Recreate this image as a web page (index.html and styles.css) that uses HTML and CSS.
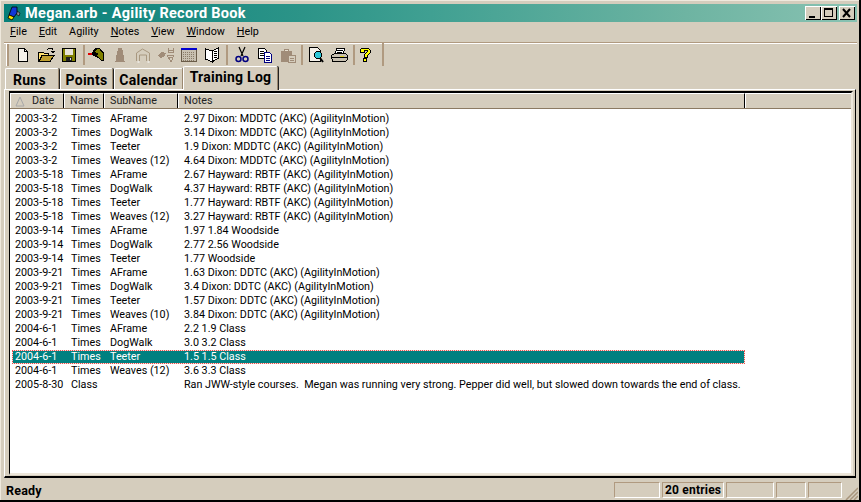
FILE: index.html
```html
<!DOCTYPE html>
<html lang="en">
<head>
<meta charset="utf-8">
<title>Megan.arb - Agility Record Book</title>
<link rel="stylesheet" href="styles.css">
</head>
<body>
<div class="window">
  <div class="titlebar">
    <svg class="appicon" width="16" height="16" viewBox="0 0 16 16"><path d="M12 6l3 2-1 3-3-2z" fill="#8a8a98" stroke="#000" stroke-width="0.600"/><path d="M7 2h5v6l-3 4-5-2z" fill="#1038d8" stroke="#000" stroke-width="0.800"/><path d="M4 10l5 2-2 3-4-2z" fill="#ffe800" stroke="#000" stroke-width="0.800"/></svg>
    <span class="titletext">Megan.arb - Agility Record Book</span>
    <div class="winbtns">
      <span class="winbtn"><svg width="16" height="14" viewBox="0 0 16 14"><rect x="4" y="10" width="6" height="2" fill="#000"/></svg></span>
      <span class="winbtn"><svg width="16" height="14" viewBox="0 0 16 14"><path d="M3 2h9v9H3z M4 4v6h7V4z" fill="#000" fill-rule="evenodd"/></svg></span>
      <span class="winbtn winclose"><svg width="16" height="14" viewBox="0 0 16 14"><path d="M4 3l7 8M11 3l-7 8" stroke="#000" stroke-width="2" fill="none"/></svg></span>
    </div>
  </div>
  <div class="menubar">
    <span class="menuitem"><u>F</u>ile</span>
    <span class="menuitem"><u>E</u>dit</span>
    <span class="menuitem">A<u>g</u>ility</span>
    <span class="menuitem"><u>N</u>otes</span>
    <span class="menuitem"><u>V</u>iew</span>
    <span class="menuitem"><u>W</u>indow</span>
    <span class="menuitem"><u>H</u>elp</span>
  </div>
  <div class="toolbar">
    <span class="grip"></span>
    <span class="tool first"><svg width="16" height="16" viewBox="0 0 16 16" shape-rendering="crispEdges"><path d="M3.500 1.500h6l3 3v10h-9z" fill="#f6f2ea" stroke="#000"/><path d="M9.500 1.500v3h3" fill="none" stroke="#000"/></svg></span>
    <span class="tool"><svg width="18" height="16" viewBox="0 0 18 16" shape-rendering="crispEdges"><path d="M1.500 5.500h5l1 1h4v8h-10z" fill="#ffe070" stroke="#000"/><path d="M2 14.500l3-6h12l-4 6z" fill="#c0a030" stroke="#000"/><path d="M10 3l2-2h3l1 2M14 4h4l-2 2z" fill="none" stroke="#000"/></svg></span>
    <span class="tool"><svg width="16" height="16" viewBox="0 0 16 16" shape-rendering="crispEdges"><rect x="1.500" y="1.500" width="13" height="13" fill="#808000" stroke="#000"/><rect x="4" y="2" width="8" height="6" fill="#e8e4d8"/><rect x="5" y="10" width="6" height="4" fill="#222"/><rect x="9" y="11" width="1" height="2" fill="#ddd"/></svg></span>
    <span class="sep"></span>
    <span class="tool"><svg width="18" height="15" viewBox="0 0 18 15" shape-rendering="crispEdges"><path d="M7 1h5l2 3 2 1v9h-3l-3-3-4-2-2-1H1V6h3z" fill="#000"/><path d="M9 2h3l1 3 2 1v7h-2l-3-3-2-2 3-1-3-1-1-1z" fill="#808000"/><rect x="0" y="6" width="4" height="2" fill="#e00000"/></svg></span>
    <span class="tool"><svg width="14" height="16" viewBox="0 0 14 16" shape-rendering="crispEdges"><path d="M5 1h4v2l1 1v3l1 2v5h1v1H2v-1h1V9l1-2V4l1-1z" fill="#a08c78"/></svg></span>
    <span class="tool"><svg width="18" height="16" viewBox="0 0 18 16" fill="none"><path d="M2.500 14V6l6-4 7 4v8" stroke="#a89880"/><path d="M5.500 14V8h7v6" stroke="#a89880"/><path d="M3.500 15h2M13.500 15h2" stroke="#fff"/></svg></span>
    <span class="tool"><svg width="18" height="16" viewBox="0 0 18 16" shape-rendering="crispEdges"><path d="M1 8l4-3 4 1-2 4-4 1z" fill="#a08c78"/><path d="M11 1v4h5V1M11 3h5M10 8l4 7 3-7zM12 10h3" fill="none" stroke="#a08c78"/></svg></span>
    <span class="tool"><svg width="16" height="16" viewBox="0 0 16 16" shape-rendering="crispEdges"><rect x="0.500" y="1.500" width="15" height="13" fill="#c8c0b0" stroke="#6a5c48"/><rect x="0" y="1" width="16" height="2" fill="#0000d0"/><path d="M2 5h12M2 7h12M2 9h12M2 11h12M2 13h12" stroke="#8a7c68" stroke-dasharray="1 1"/></svg></span>
    <span class="tool"><svg width="16" height="16" viewBox="0 0 16 16" fill="#fff" stroke="#000" shape-rendering="crispEdges"><path d="M8 4L1.500 2v10L8 15z"/><path d="M8 4l6.500-3v10L8 15z"/><path d="M10 5l3-1M10 7l3-1M10 9l3-1M10 11l3-1" fill="none"/></svg></span>
    <span class="sep sep-r"></span>
    <span class="tool"><svg width="14" height="18" viewBox="0 0 14 18" fill="none"><path d="M4 1l4 9M10 1L6 10" stroke="#000" stroke-width="1.200"/><circle cx="3.500" cy="13" r="2.500" stroke="#000080" stroke-width="1.500"/><circle cx="10.500" cy="13" r="2.500" stroke="#000080" stroke-width="1.500"/></svg></span>
    <span class="tool"><svg width="16" height="16" viewBox="0 0 16 16" shape-rendering="crispEdges"><path d="M1.500 1.500h6l2 2v8h-8z" fill="#fff" stroke="#000"/><path d="M3 4h4M3 6h4M3 8h4" stroke="#000"/><path d="M7.500 5.500h5l2 2v8h-7z" fill="#fff" stroke="#000080"/><path d="M9 9h4M9 11h4M9 13h4" stroke="#000080"/></svg></span>
    <span class="tool"><svg width="16" height="16" viewBox="0 0 16 16" shape-rendering="crispEdges"><path d="M1 4h3V2h5v2h3v11H1z" fill="#a08c78"/><path d="M8 8h7v7H8z" fill="#d5cdbd" stroke="#a08c78"/><path d="M10 11h4M10 13h4" stroke="#a08c78"/><path d="M5 3h3" stroke="#e8e0d0"/></svg></span>
    <span class="sep sep-m"></span>
    <span class="tool"><svg width="17" height="16" viewBox="0 0 17 16" shape-rendering="crispEdges"><path d="M1.500 0.500h8l3 3v11h-11z" fill="#f4f0e8" stroke="#000"/><circle cx="10" cy="8" r="3.500" fill="#30c8d8" stroke="#000"/><path d="M12 11l3 4" stroke="#000" stroke-width="2" shape-rendering="auto"/></svg></span>
    <span class="tool"><svg width="17" height="16" viewBox="0 0 17 16" shape-rendering="crispEdges"><path d="M5.500 1.500h8l-1 5h-8z" fill="#fff" stroke="#000"/><path d="M6 3h6M6 5h5" stroke="#000"/><path d="M0.500 8.500l3-2h11l2 2v4l-2 2h-13z" fill="#c8c0b0" stroke="#000"/><path d="M1 10h15" stroke="#000"/><path d="M9 9h4" stroke="#e0d020"/></svg></span>
    <span class="sep sep-m"></span>
    <span class="tool tool-help"><svg width="12" height="16" viewBox="0 0 12 16" shape-rendering="crispEdges"><path d="M3 1h6l2 2v3l-3 3v1H5V8l3-3V3H5v2H1V3z" fill="#ffff00" stroke="#000"/><rect x="4.500" y="11.500" width="3" height="3" fill="#ffff00" stroke="#000"/></svg></span>
    <span class="sep sep-end"></span>
  </div>
  <div class="tabs">
    <span class="tab tab-runs">Runs</span>
    <span class="tab tab-points">Points</span>
    <span class="tab tab-cal">Calendar</span>
    <span class="tab tab-active">Training Log</span>
  </div>
  <div class="panel">
    <div class="list">
      <div class="head">
        <span class="hcell c-date"><svg class="sorticon" width="10" height="11" viewBox="0 0 10 11" fill="none"><path d="M5 1L1 10h8z" stroke="#a8a8a8"/></svg>Date</span>
        <span class="hcell c-name">Name</span>
        <span class="hcell c-sub">SubName</span>
        <span class="hcell c-notes">Notes</span>
        <span class="hcell c-rest"></span>
      </div>
      <div class="rows">
        <div class="row"><span class="c-date">2003-3-2</span><span class="c-name">Times</span><span class="c-sub">AFrame</span><span class="c-notes">2.97 Dixon: MDDTC (AKC) (AgilityInMotion)</span></div>
        <div class="row"><span class="c-date">2003-3-2</span><span class="c-name">Times</span><span class="c-sub">DogWalk</span><span class="c-notes">3.14 Dixon: MDDTC (AKC) (AgilityInMotion)</span></div>
        <div class="row"><span class="c-date">2003-3-2</span><span class="c-name">Times</span><span class="c-sub">Teeter</span><span class="c-notes">1.9 Dixon: MDDTC (AKC) (AgilityInMotion)</span></div>
        <div class="row"><span class="c-date">2003-3-2</span><span class="c-name">Times</span><span class="c-sub">Weaves (12)</span><span class="c-notes">4.64 Dixon: MDDTC (AKC) (AgilityInMotion)</span></div>
        <div class="row"><span class="c-date">2003-5-18</span><span class="c-name">Times</span><span class="c-sub">AFrame</span><span class="c-notes">2.67 Hayward: RBTF (AKC) (AgilityInMotion)</span></div>
        <div class="row"><span class="c-date">2003-5-18</span><span class="c-name">Times</span><span class="c-sub">DogWalk</span><span class="c-notes">4.37 Hayward: RBTF (AKC) (AgilityInMotion)</span></div>
        <div class="row"><span class="c-date">2003-5-18</span><span class="c-name">Times</span><span class="c-sub">Teeter</span><span class="c-notes">1.77 Hayward: RBTF (AKC) (AgilityInMotion)</span></div>
        <div class="row"><span class="c-date">2003-5-18</span><span class="c-name">Times</span><span class="c-sub">Weaves (12)</span><span class="c-notes">3.27 Hayward: RBTF (AKC) (AgilityInMotion)</span></div>
        <div class="row"><span class="c-date">2003-9-14</span><span class="c-name">Times</span><span class="c-sub">AFrame</span><span class="c-notes">1.97 1.84 Woodside</span></div>
        <div class="row"><span class="c-date">2003-9-14</span><span class="c-name">Times</span><span class="c-sub">DogWalk</span><span class="c-notes">2.77 2.56 Woodside</span></div>
        <div class="row"><span class="c-date">2003-9-14</span><span class="c-name">Times</span><span class="c-sub">Teeter</span><span class="c-notes">1.77 Woodside</span></div>
        <div class="row"><span class="c-date">2003-9-21</span><span class="c-name">Times</span><span class="c-sub">AFrame</span><span class="c-notes">1.63 Dixon: DDTC (AKC) (AgilityInMotion)</span></div>
        <div class="row"><span class="c-date">2003-9-21</span><span class="c-name">Times</span><span class="c-sub">DogWalk</span><span class="c-notes">3.4 Dixon: DDTC (AKC) (AgilityInMotion)</span></div>
        <div class="row"><span class="c-date">2003-9-21</span><span class="c-name">Times</span><span class="c-sub">Teeter</span><span class="c-notes">1.57 Dixon: DDTC (AKC) (AgilityInMotion)</span></div>
        <div class="row"><span class="c-date">2003-9-21</span><span class="c-name">Times</span><span class="c-sub">Weaves (10)</span><span class="c-notes">3.84 Dixon: DDTC (AKC) (AgilityInMotion)</span></div>
        <div class="row"><span class="c-date">2004-6-1</span><span class="c-name">Times</span><span class="c-sub">AFrame</span><span class="c-notes">2.2 1.9 Class</span></div>
        <div class="row"><span class="c-date">2004-6-1</span><span class="c-name">Times</span><span class="c-sub">DogWalk</span><span class="c-notes">3.0 3.2 Class</span></div>
        <div class="row selected"><span class="c-date">2004-6-1</span><span class="c-name">Times</span><span class="c-sub">Teeter</span><span class="c-notes">1.5 1.5 Class</span></div>
        <div class="row"><span class="c-date">2004-6-1</span><span class="c-name">Times</span><span class="c-sub">Weaves (12)</span><span class="c-notes">3.6 3.3 Class</span></div>
        <div class="row"><span class="c-date">2005-8-30</span><span class="c-name">Class</span><span class="c-sub"></span><span class="c-notes">Ran JWW-style courses.&nbsp; Megan was running very strong. Pepper did well, but slowed down towards the end of class.</span></div>
      </div>
    </div>
  </div>
  <div class="statusbar">
    <span class="ready">Ready</span>
    <span class="pane p1"></span>
    <span class="pane p2">20 entries</span>
    <span class="pane p3"></span>
    <span class="pane p4"></span>
    <span class="pane p5"></span>
    <svg class="sizegrip" width="13" height="13" viewBox="0 0 13 13" fill="none"><path d="M1 13L13 1M5 13l8-8M9 13l4-4" stroke="#a8957c" stroke-width="1.500"/></svg>
  </div>
</div>
</body>
</html>
```
FILE: styles.css
```css
* { box-sizing: border-box; }
html, body { margin: 0; padding: 0; }
body {
  width: 861px;
  height: 502px;
  overflow: hidden;
  background: #d5cdbd;
  font-family: Roboto, "Liberation Sans", sans-serif;
  font-size: 10.750px;
  color: #000;
}
.window {
  width: 861px;
  height: 502px;
  display: flex;
  flex-direction: column;
  padding: 4px 0 0 4px;
  background: #d5cdbd;
  border-right: 2px solid #000;
  border-bottom: 2px solid #000;
  box-shadow: inset 1px 1px 0 #efe9dd;
}
.titlebar {
  flex: none;
  width: 853px;
  height: 18px;
  display: flex;
  align-items: center;
  padding: 0 2px 0 1px;
  background: linear-gradient(90deg, #067f79 0%, #2c9488 35%, #40a092 50%, #6eb4a2 80%, #88c2b2 100%);
}
.appicon { flex: none; }
.titletext {
  margin-left: 4px;
  color: #fff;
  font-family: Roboto, sans-serif;
  font-weight: 700;
  font-size: 14.500px;
  letter-spacing: 0.300px;
  white-space: nowrap;
}
.winbtns { margin-left: auto; display: flex; }
.winbtn {
  width: 16px;
  height: 14px;
  background: #d5cdbd;
  box-shadow: inset 1px 1px 0 #fff, inset -1px -1px 0 #000;
  display: block;
}
.winbtn svg { display: block; }
.winclose { margin-left: 2px; }
.menubar {
  flex: none;
  height: 20px;
  display: flex;
  align-items: center;
  padding-left: 6px;
  padding-bottom: 1px;
  font-size: 10.750px;
  width: 853px;
  gap: 12px;
}
.toolbar {
  flex: none;
  width: 853px;
  height: 26px;
  display: flex;
  align-items: center;
  padding-bottom: 2px;
  border-top: 1px solid #b09a80;
  box-shadow: inset 0 1px 0 #fff;
}
.grip {
  flex: none;
  width: 2px;
  height: 22px;
  margin-left: 3px;
  background: #b09a80;
  box-shadow: -1px 0 0 #fff;
}
.tool {
  flex: none;
  width: 23px;
  height: 22px;
  display: flex;
  align-items: center;
  justify-content: center;
}
.tool svg { display: block; }
.first { margin-left: 2px; }
.tool-help { width: 16px; }
.sep {
  flex: none;
  width: 2px;
  height: 20px;
  background: #b09a80;
  margin-left: 3px;
}
.sep-r { margin-right: 2px; }
.sep-m { margin-left: 2px; margin-right: 2px; }
.sep-end { height: 23px; margin-left: 9px; }
.tabs {
  flex: none;
  height: 21px;
  display: flex;
  align-items: flex-end;
  padding-left: 1px;
  font-family: Roboto, sans-serif;
  font-weight: 700;
  font-size: 14px;
  letter-spacing: 0.250px;
  width: 853px;
}
.tab {
  height: 21px;
  display: flex;
  align-items: center;
  justify-content: center;
  padding-top: 1px;
  border-top: 1px solid #fff;
  border-left: 1px solid #fff;
  border-right: 1px solid #9a8870;
  box-shadow: 1px 0 0 #222;
  border-radius: 2px 2px 0 0;
  white-space: nowrap;
}
.tab-runs { width: 54px; margin-right: 1px; padding-right: 5px; }
.tab-points { width: 53px; margin-right: 1px; }
.tab-cal { width: 69px; }
.tab-active {
  width: 95px;
  height: 24px;
  padding-top: 0;
  padding-bottom: 4px;
  margin-bottom: -1px;
  position: relative;
  background: #d5cdbd;
}
.panel {
  flex: none;
  width: 852px;
  height: 389px;
  padding: 1px 2px 1px 4px;
  border-top: 1px solid #fff;
  border-left: 1px solid #fff;
  border-right: 1px solid #000;
  border-bottom: 2px solid #000;
}
.list {
  height: 100%;
  display: flex;
  flex-direction: column;
  background: #fff;
  border-top: 2px solid #000;
  border-left: 1px solid #000;
  border-right: 2px solid #ece6da;
  border-bottom: 2px solid #ece6da;
}
.head {
  flex: none;
  height: 16px;
  display: flex;
  background: #d5cdbd;
  border-bottom: 1px solid #8c7a62;
}
.hcell {
  height: 15px;
  line-height: 14px;
  padding-left: 5px;
  border-top: 1px solid #fff;
  border-left: 1px solid #fff;
  border-right: 1px solid #000;
  white-space: nowrap;
  color: #222;
}
.head .c-date { width: 54px; padding-left: 4px; display: flex; align-items: center; }
.head .c-name { width: 40px; }
.head .c-sub { width: 74px; }
.head .c-notes { width: 567px; }
.head .c-rest { flex: 1; border-right: 0; }
.sorticon { margin-right: 7px; flex: none; }
.rows { flex: 1; padding: 3px 0 0 2px; }
.row {
  width: 733px;
  height: 14px;
  line-height: 14px;
  display: flex;
  white-space: nowrap;
}
.row .c-date { width: 59px; padding-left: 3px; flex: none; }
.row .c-name { width: 39px; flex: none; }
.row .c-sub { width: 74px; flex: none; }
.row .c-notes { flex: none; }
.selected {
  color: #fff;
  background-color: #008080;
  background-image:
    repeating-linear-gradient(90deg, #e85050 0 1px, #f8e0d8 1px 2px),
    repeating-linear-gradient(90deg, #e85050 0 1px, #f8e0d8 1px 2px),
    repeating-linear-gradient(0deg, #e85050 0 1px, #f8e0d8 1px 2px),
    repeating-linear-gradient(0deg, #e85050 0 1px, #f8e0d8 1px 2px);
  background-size: 100% 1px, 100% 1px, 1px 100%, 1px 100%;
  background-position: 0 0, 0 100%, 0 0, 100% 0;
  background-repeat: no-repeat;
}
.statusbar {
  flex: none;
  width: 855px;
  height: 22px;
  display: flex;
  align-items: center;
  padding-top: 2px;
}
.ready {
  flex: none;
  width: 610px;
  padding-left: 2px;
  font-weight: 700;
  font-size: 12.500px;
  letter-spacing: 0.200px;
}
.pane {
  flex: none;
  height: 16px;
  line-height: 14px;
  border-top: 1px solid #b09a80;
  border-left: 1px solid #b09a80;
  border-right: 1px solid #fff;
  border-bottom: 1px solid #fff;
  font-weight: 700;
  font-size: 12px;
  letter-spacing: 0.200px;
  white-space: nowrap;
  margin-right: 2px;
}
.p1 { width: 46px; }
.p2 { width: 62px; padding-left: 2px; }
.p3 { width: 48px; }
.p4 { width: 30px; }
.p5 { width: 34px; }
.sizegrip { flex: none; margin-left: 1px; align-self: flex-end; }
```
